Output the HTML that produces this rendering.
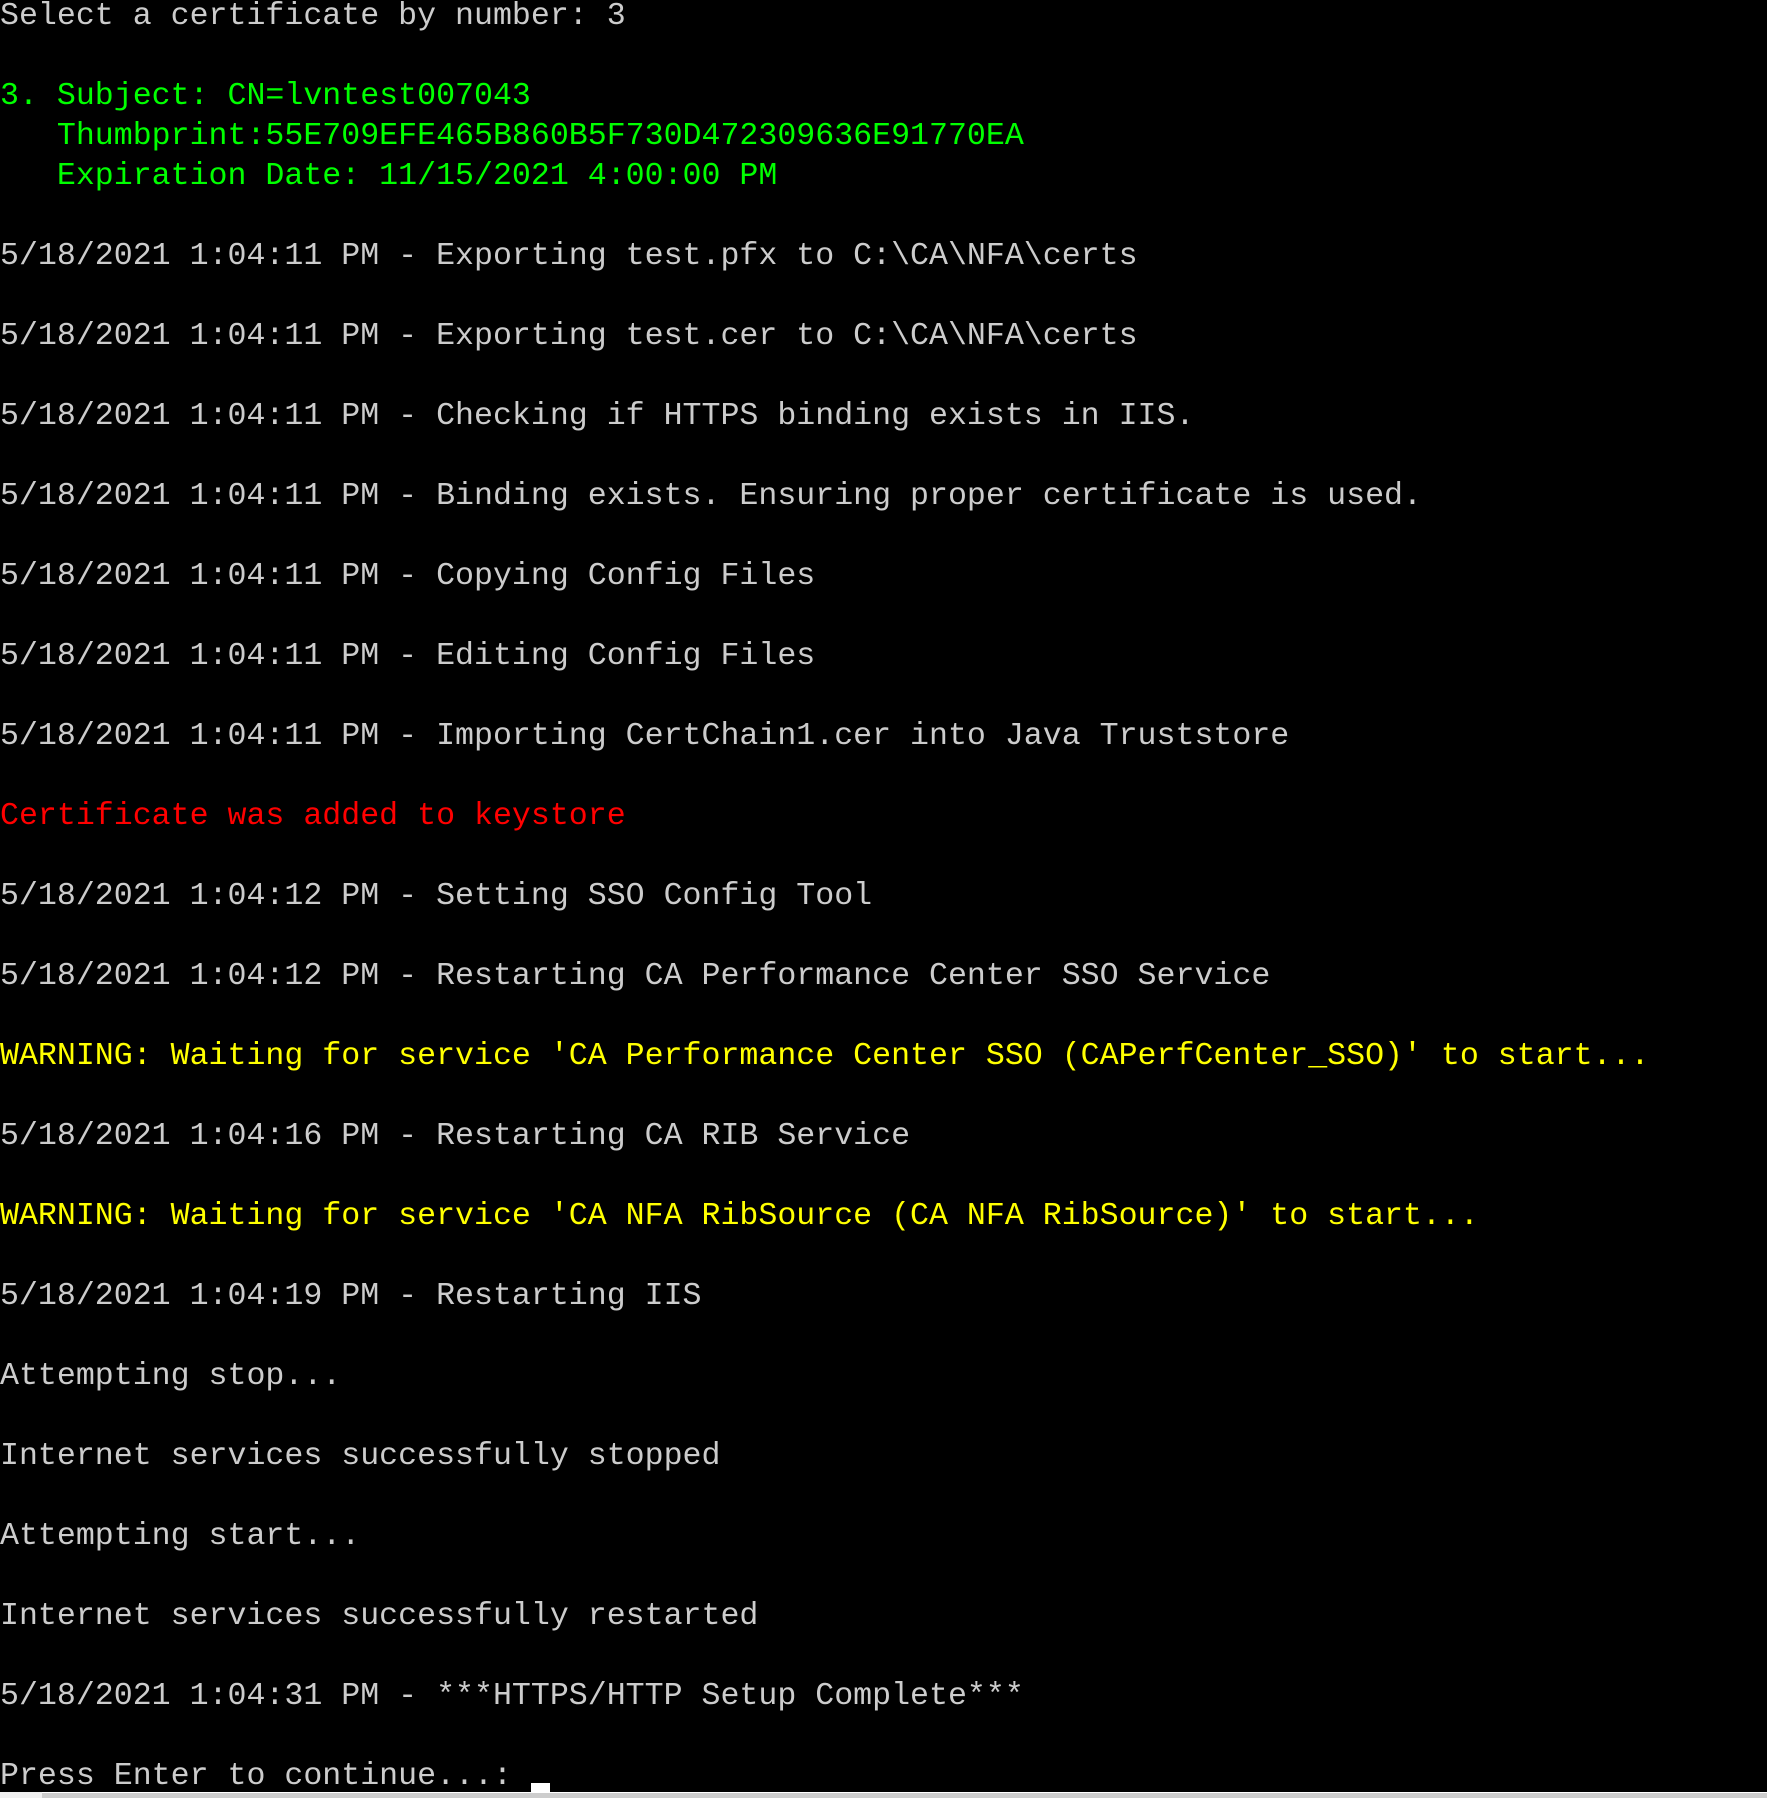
<!DOCTYPE html>
<html><head><meta charset="utf-8"><style>
html,body{margin:0;padding:0;background:#000;width:1767px;height:1798px;overflow:hidden}
pre{position:absolute;left:0;top:-3px;margin:0;font-family:"Liberation Mono",monospace;font-size:31.6px;line-height:40px;color:#cccccc;white-space:pre}
.g{color:#00ff00}.r{color:#ff0000}.y{color:#ffff00}
#cur{position:absolute;left:531px;top:1783px;width:19px;height:10px;background:#fff}
#bar{position:absolute;left:0;top:1792px;width:1767px;height:6px;background:#cdcdcd;border-top:1px solid #fff;box-sizing:border-box}
#barl{position:absolute;left:0;top:1792px;width:42px;height:6px;background:#f0f0f0}
</style></head><body>
<pre>Select a certificate by number: 3

<span class="g">3. Subject: CN=lvntest007043
   Thumbprint:55E709EFE465B860B5F730D472309636E91770EA
   Expiration Date: 11/15/2021 4:00:00 PM</span>

5/18/2021 1:04:11 PM - Exporting test.pfx to C:\CA\NFA\certs

5/18/2021 1:04:11 PM - Exporting test.cer to C:\CA\NFA\certs

5/18/2021 1:04:11 PM - Checking if HTTPS binding exists in IIS.

5/18/2021 1:04:11 PM - Binding exists. Ensuring proper certificate is used.

5/18/2021 1:04:11 PM - Copying Config Files

5/18/2021 1:04:11 PM - Editing Config Files

5/18/2021 1:04:11 PM - Importing CertChain1.cer into Java Truststore

<span class="r">Certificate was added to keystore</span>

5/18/2021 1:04:12 PM - Setting SSO Config Tool

5/18/2021 1:04:12 PM - Restarting CA Performance Center SSO Service

<span class="y">WARNING: Waiting for service 'CA Performance Center SSO (CAPerfCenter_SSO)' to start...</span>

5/18/2021 1:04:16 PM - Restarting CA RIB Service

<span class="y">WARNING: Waiting for service 'CA NFA RibSource (CA NFA RibSource)' to start...</span>

5/18/2021 1:04:19 PM - Restarting IIS

Attempting stop...

Internet services successfully stopped

Attempting start...

Internet services successfully restarted

5/18/2021 1:04:31 PM - ***HTTPS/HTTP Setup Complete***

Press Enter to continue...: </pre>
<div id="cur"></div>
<div id="bar"></div>
<div id="barl"></div>
</body></html>
